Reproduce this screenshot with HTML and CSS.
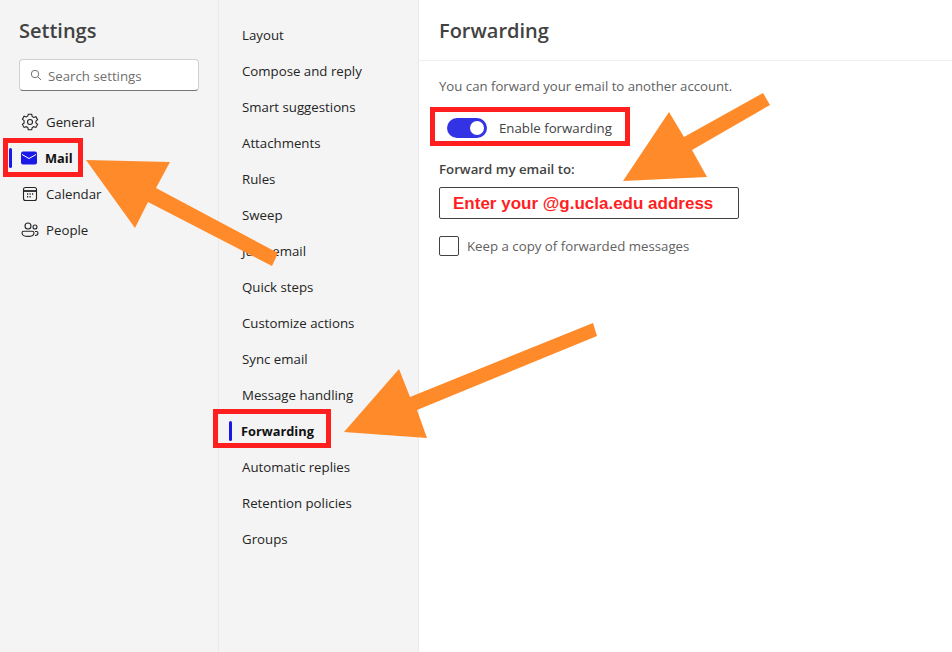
FILE: index.html
```html
<!doctype html>
<html>
<head>
<meta charset="utf-8">
<title>Settings - Forwarding</title>
<link rel="stylesheet" href="styles.css">
</head>

<body>
<div class="page">
    <div class="side">
        <h1 class="side-title">Settings</h1>
        <div class="search">
            <svg class="search-icon" width="12" height="12" viewBox="0 0 12 12"><circle cx="5" cy="5" r="3.7" fill="none" stroke="#757575" stroke-width="1"/><path d="M7.8 7.8 11 11" stroke="#757575" stroke-width="1" fill="none"/></svg>
            <span>Search settings</span>
        </div>
        <ul class="side-nav">
            <li>
                <svg width="20" height="20" viewBox="0 0 20 20" fill="none" stroke="#242424" stroke-width="1.1"><path d="M8.3 2.3h3.4l.5 2.2 1.5.9 2.2-.7 1.7 3-1.7 1.5v1.700l1.700 1.500-1.700 3-2.200-.7-1.500.9-.5 2.200H8.300l-.5-2.200-1.500-.9-2.200.7-1.700-3 1.700-1.500V8.700L2.400 7.200l1.700-3 2.200.7 1.500-.9z"/><circle cx="10" cy="10" r="2.500"/></svg>
                <span>General</span>
            </li>
            <li class="current">
                <i class="bar"></i>
                <svg width="18" height="14" viewBox="0 0 18 14"><rect x="1" y="0.500" width="16" height="13" rx="2" fill="#1a1ae6"/><path d="M2 3.500 9 7.500l7-4" fill="none" stroke="#fff" stroke-width="1"/></svg>
                <span>Mail</span>
            </li>
            <li>
                <svg width="20" height="20" viewBox="0 0 20 20" fill="none" stroke="#242424" stroke-width="1.100"><rect x="3.500" y="3.500" width="13" height="13" rx="2"/><path d="M3.500 7h13" stroke-width="1.800"/><path d="M7 10h1.200M9.500 10h1.200M12 10h1.200M7 12.800h1.200M9.500 12.800h1.200" stroke-width="1.400"/></svg>
                <span>Calendar</span>
            </li>
            <li>
                <svg width="20" height="20" viewBox="0 0 20 20" fill="none" stroke="#242424" stroke-width="1.100"><circle cx="8" cy="6" r="3"/><circle cx="15" cy="7" r="2"/><path d="M2 13c0-1 .8-1.700 1.800-1.700h8.400c1 0 1.800.7 1.800 1.700 0 2.200-2.500 3.400-6 3.400s-6-1.200-6-3.400z"/><path d="M15 11.500h1.500c.9 0 1.500.6 1.500 1.500 0 1.400-1.200 2.400-3 2.500"/></svg>
                <span>People</span>
            </li>
        </ul>
    </div>

    <ul class="sub">
        <li>Layout</li>
        <li>Compose and reply</li>
        <li>Smart suggestions</li>
        <li>Attachments</li>
        <li>Rules</li>
        <li>Sweep</li>
        <li>Junk email</li>
        <li>Quick steps</li>
        <li>Customize actions</li>
        <li>Sync email</li>
        <li>Message handling</li>
        <li class="current"><i class="bar"></i>Forwarding</li>
        <li>Automatic replies</li>
        <li>Retention policies</li>
        <li>Groups</li>
    </ul>

    <div class="main">
        <h2 class="main-title">Forwarding</h2>
        <div class="main-body">
            <p class="intro">You can forward your email to another account.</p>
            <div class="toggle-row">
                <span class="toggle"><i></i></span>
                <span>Enable forwarding</span>
            </div>
            <div class="field-label">Forward my email to:</div>
            <div class="field">Enter your @g.ucla.edu address</div>
            <div class="check-row">
                <span class="check"></span>
                <span>Keep a copy of forwarded messages</span>
            </div>
        </div>
    </div>
</div>

<div class="mark mark-mail"></div>
<div class="mark mark-toggle"></div>
<div class="mark mark-forward"></div>

<svg class="arrows" width="952" height="652" viewBox="0 0 952 652">
    <polygon points="86,160 170,162 156,188 278,253 272,266 148,202 135,228"/>
    <polygon points="344,432 399,369 410,397 593,323 597,336 417,410 427,438"/>
    <polygon points="623,181 669,112 684,137 763,93 770,105 692,150 707,177"/>
</svg>
</body>
</html>
```

FILE: styles.css
```css
body,div,ul,li,h1,h2,p{margin:0;padding:0;}
ul{list-style-type:none;}
body{background:#fff;color:#242424;font:13.25px/20px "Open Sans","Noto Sans",Arial,sans-serif;overflow:hidden;}
.page{display:flex;width:952px;height:652px;}

.side{width:180px;height:652px;background:#f4f4f4;border-right:1px solid #eaeaea;padding:16px 19px 0;box-sizing:content-box;}
.side-title{font-size:20px;line-height:30px;font-weight:600;color:#424242;}
.search{display:flex;align-items:center;gap:6px;height:30px;margin-top:13px;padding-left:10px;background:#fff;border:1px solid #d1d1d1;border-bottom-color:#757575;border-radius:4px;color:#707070;}
.search span{padding-top:2px;}
.side-nav{margin-top:13px;margin-left:-19px;}
.side-nav li{position:relative;display:flex;align-items:center;gap:6px;height:36px;padding-left:20px;}
.side-nav li.current{font-weight:700;font-size:12.8px;color:#111;gap:7px;}
.bar{position:absolute;width:3px;height:20px;border-radius:2px;background:#1a1ae6;}
.side-nav .bar{left:9px;top:8px;}

.sub{width:200px;height:652px;background:#f4f4f4;border-right:1px solid #eaeaea;padding-top:17px;box-sizing:border-box;}
.sub li{position:relative;height:36px;line-height:36px;padding-left:23px;}
.sub li.current{font-weight:700;font-size:12.8px;color:#111;padding-left:22px;}
.sub .bar{left:10px;top:8px;}

.main{flex:1;}
.main-title{height:60px;line-height:62px;padding-left:20px;font-size:20px;font-weight:600;color:#424242;border-bottom:1px solid #eee;}
.main-body{padding:15px 0 0 20px;color:#424242;}
.intro{color:#616161;font-size:13.2px;}
.toggle-row{display:flex;align-items:center;gap:12px;height:20px;margin:22px 0 0 8px;}
.toggle{display:flex;align-items:center;justify-content:flex-end;width:40px;height:20px;padding-right:3px;box-sizing:border-box;border-radius:10px;background:#3333e6;}
.toggle i{width:14px;height:14px;border-radius:50%;background:#fff;}
.field-label{margin-top:21px;font-weight:600;}
.field{width:300px;height:32px;margin-top:8px;padding-left:13px;box-sizing:border-box;border:1px solid #424242;border-radius:2px;color:#ff1f1f;font:bold 17px/32px "Liberation Sans",Arial,sans-serif;}
.check-row{display:flex;align-items:center;gap:8px;margin-top:16px;color:#616161;line-height:22px;}
.check{width:18px;height:18px;border:1px solid #424242;border-radius:2px;background:#fff;}

.mark{position:absolute;border:5px solid #ff1f1f;box-sizing:border-box;}
.mark-mail{left:3px;top:138px;width:80px;height:39px;}
.mark-toggle{left:430px;top:107px;width:200px;height:39px;}
.mark-forward{left:213px;top:409px;width:118px;height:39px;}

.arrows{position:absolute;left:0;top:0;}
.arrows polygon{fill:#ff8a2a;}
```
